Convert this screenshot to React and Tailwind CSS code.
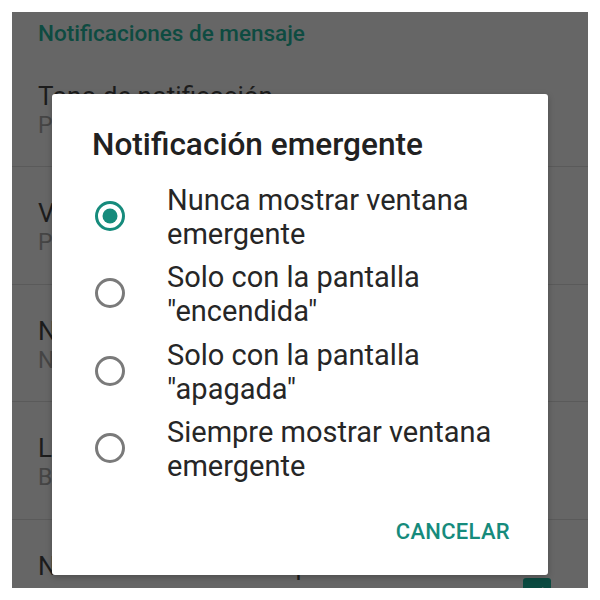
export default function App() {
  const rows = [
    { t: "Tono de notificación", s: "Predeterminado (Spaceline)" },
    { t: "Vibración", s: "Predeterminada" },
    { t: "Notificación emergente", s: "No mostrar ventana emergente" },
    { t: "Luz", s: "Blanco" },
  ];
  const options = [
    ["Nunca mostrar ventana", "emergente"],
    ["Solo con la pantalla", "\"encendida\""],
    ["Solo con la pantalla", "\"apagada\""],
    ["Siempre mostrar ventana", "emergente"],
  ];
  return (
    <div className="w-[600px] h-[600px] bg-white p-[12px]" style={{ fontFamily: "Roboto, 'Liberation Sans', sans-serif" }}>
      <div className="relative w-[576px] h-[576px] bg-[#666666] overflow-hidden">
        <div className="flex flex-col">
          <div className="h-[37.5px] pl-[26px] pt-[6px] text-[22.5px] leading-[30px] font-medium text-[#0e4b41]">
            Notificaciones de mensaje
          </div>
          {rows.map((r, i) => (
            <div key={i} className="h-[117.5px] pl-[26px] pt-[31px] border-b border-[#5a5a5a] flex flex-col">
              <div className="text-[26px] leading-[30px] text-[#1c1c1c] whitespace-nowrap">{r.t}</div>
              <div className="text-[23px] leading-[30px] text-[#454545] whitespace-nowrap">{r.s}</div>
            </div>
          ))}
          <div className="h-[117.5px] pl-[26px] pr-[37px] pt-[31px] flex justify-between">
            <div className="text-[26px] leading-[30px] text-[#1c1c1c] whitespace-nowrap">Notificaciones de alta prioridad</div>
            <div className="mt-[27px] w-[28px] h-[28px] shrink-0 rounded-[3px] bg-[#0b4a40] flex items-center justify-center">
              <svg width="20" height="20" viewBox="0 0 24 24" fill="none" stroke="#5a6b68" strokeWidth="3">
                <path d="M5 12l5 5L20 7" />
              </svg>
            </div>
          </div>
        </div>

        <div className="absolute left-[40px] top-[82px] w-[496px] h-[481px] bg-white rounded-[3px] shadow-[0_2px_6px_rgba(0,0,0,0.25)] flex flex-col">
          <div className="pt-[32px] pl-[40px] text-[31.6px] leading-[38px] font-medium text-[#212121] whitespace-nowrap">
            Notificación emergente
          </div>
          <div className="mt-[19px] flex flex-col gap-[9.4px]">
            {options.map((o, i) => (
              <div key={i} className="flex items-start">
                <div className="ml-[43px] mt-[18px] w-[30px] h-[30px] shrink-0">
                  <svg width="30" height="30" viewBox="0 0 30 30">
                    <circle cx="15" cy="15" r="13.5" fill="none" stroke={i === 0 ? "#168b7c" : "#7a7a7a"} strokeWidth="3" />
                    {i === 0 && <circle cx="15" cy="15" r="7.5" fill="#168b7c" />}
                  </svg>
                </div>
                <div className="ml-[42px] text-[29px] leading-[34px] text-[#262626]">
                  <div className="whitespace-nowrap">{o[0]}</div>
                  <div className="whitespace-nowrap">{o[1]}</div>
                </div>
              </div>
            ))}
          </div>
          <div className="flex-1" />
          <div className="flex justify-end pr-[38px] pb-[30px]">
            <div className="text-[22px] leading-[26px] font-medium text-[#168b7c] tracking-[0.3px]">CANCELAR</div>
          </div>
        </div>
      </div>
    </div>
  );
}
